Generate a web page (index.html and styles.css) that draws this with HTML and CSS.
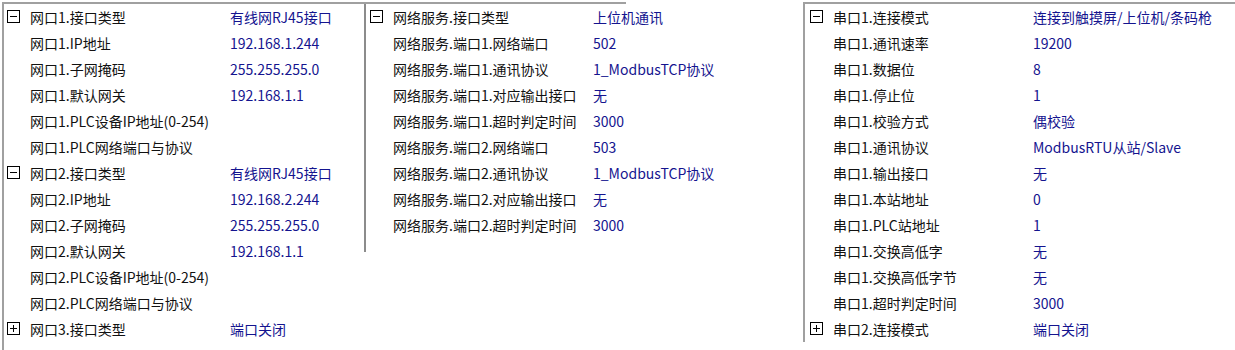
FILE: index.html
```html
<!DOCTYPE html>
<html lang="zh-CN">
<head>
<meta charset="utf-8">
<title>参数设置</title>
<link rel="stylesheet" href="styles.css">
</head>
<body>
<div class="screen">
  <div class="group-left">
    <div class="panel panel-a">
      <div class="row"><svg class="tg" viewBox="0 0 13 13"><rect x="0.5" y="0.5" width="12" height="12"/><line x1="3" y1="6.5" x2="10" y2="6.5"/></svg><span class="lbl">网口1.接口类型</span><span class="val">有线网RJ45接口</span></div>
      <div class="row"><span class="tg"></span><span class="lbl">网口1.IP地址</span><span class="val">192.168.1.244</span></div>
      <div class="row"><span class="tg"></span><span class="lbl">网口1.子网掩码</span><span class="val">255.255.255.0</span></div>
      <div class="row"><span class="tg"></span><span class="lbl">网口1.默认网关</span><span class="val">192.168.1.1</span></div>
      <div class="row"><span class="tg"></span><span class="lbl">网口1.PLC设备IP地址(0-254)</span><span class="val"></span></div>
      <div class="row"><span class="tg"></span><span class="lbl">网口1.PLC网络端口与协议</span><span class="val"></span></div>
      <div class="row"><svg class="tg" viewBox="0 0 13 13"><rect x="0.5" y="0.5" width="12" height="12"/><line x1="3" y1="6.5" x2="10" y2="6.5"/></svg><span class="lbl">网口2.接口类型</span><span class="val">有线网RJ45接口</span></div>
      <div class="row"><span class="tg"></span><span class="lbl">网口2.IP地址</span><span class="val">192.168.2.244</span></div>
      <div class="row"><span class="tg"></span><span class="lbl">网口2.子网掩码</span><span class="val">255.255.255.0</span></div>
      <div class="row"><span class="tg"></span><span class="lbl">网口2.默认网关</span><span class="val">192.168.1.1</span></div>
      <div class="row"><span class="tg"></span><span class="lbl">网口2.PLC设备IP地址(0-254)</span><span class="val"></span></div>
      <div class="row"><span class="tg"></span><span class="lbl">网口2.PLC网络端口与协议</span><span class="val"></span></div>
      <div class="row"><svg class="tg" viewBox="0 0 13 13"><rect x="0.5" y="0.5" width="12" height="12"/><line x1="3" y1="6.5" x2="10" y2="6.5"/><line x1="6.5" y1="3" x2="6.5" y2="10"/></svg><span class="lbl">网口3.接口类型</span><span class="val">端口关闭</span></div>
    </div>
    <div class="panel panel-b">
      <div class="row"><svg class="tg" viewBox="0 0 13 13"><rect x="0.5" y="0.5" width="12" height="12"/><line x1="3" y1="6.5" x2="10" y2="6.5"/></svg><span class="lbl">网络服务.接口类型</span><span class="val">上位机通讯</span></div>
      <div class="row"><span class="tg"></span><span class="lbl">网络服务.端口1.网络端口</span><span class="val">502</span></div>
      <div class="row"><span class="tg"></span><span class="lbl">网络服务.端口1.通讯协议</span><span class="val">1_ModbusTCP协议</span></div>
      <div class="row"><span class="tg"></span><span class="lbl">网络服务.端口1.对应输出接口</span><span class="val">无</span></div>
      <div class="row"><span class="tg"></span><span class="lbl">网络服务.端口1.超时判定时间</span><span class="val">3000</span></div>
      <div class="row"><span class="tg"></span><span class="lbl">网络服务.端口2.网络端口</span><span class="val">503</span></div>
      <div class="row"><span class="tg"></span><span class="lbl">网络服务.端口2.通讯协议</span><span class="val">1_ModbusTCP协议</span></div>
      <div class="row"><span class="tg"></span><span class="lbl">网络服务.端口2.对应输出接口</span><span class="val">无</span></div>
      <div class="row"><span class="tg"></span><span class="lbl">网络服务.端口2.超时判定时间</span><span class="val">3000</span></div>
    </div>
  </div>
  <div class="panel panel-c">
    <div class="row"><svg class="tg" viewBox="0 0 13 13"><rect x="0.5" y="0.5" width="12" height="12"/><line x1="3" y1="6.5" x2="10" y2="6.5"/></svg><span class="lbl">串口1.连接模式</span><span class="val">连接到触摸屏/上位机/条码枪</span></div>
    <div class="row"><span class="tg"></span><span class="lbl">串口1.通讯速率</span><span class="val">19200</span></div>
    <div class="row"><span class="tg"></span><span class="lbl">串口1.数据位</span><span class="val">8</span></div>
    <div class="row"><span class="tg"></span><span class="lbl">串口1.停止位</span><span class="val">1</span></div>
    <div class="row"><span class="tg"></span><span class="lbl">串口1.校验方式</span><span class="val">偶校验</span></div>
    <div class="row"><span class="tg"></span><span class="lbl">串口1.通讯协议</span><span class="val">ModbusRTU从站/Slave</span></div>
    <div class="row"><span class="tg"></span><span class="lbl">串口1.输出接口</span><span class="val">无</span></div>
    <div class="row"><span class="tg"></span><span class="lbl">串口1.本站地址</span><span class="val">0</span></div>
    <div class="row"><span class="tg"></span><span class="lbl">串口1.PLC站地址</span><span class="val">1</span></div>
    <div class="row"><span class="tg"></span><span class="lbl">串口1.交换高低字</span><span class="val">无</span></div>
    <div class="row"><span class="tg"></span><span class="lbl">串口1.交换高低字节</span><span class="val">无</span></div>
    <div class="row"><span class="tg"></span><span class="lbl">串口1.超时判定时间</span><span class="val">3000</span></div>
    <div class="row"><svg class="tg" viewBox="0 0 13 13"><rect x="0.5" y="0.5" width="12" height="12"/><line x1="3" y1="6.5" x2="10" y2="6.5"/><line x1="6.5" y1="3" x2="6.5" y2="10"/></svg><span class="lbl">串口2.连接模式</span><span class="val">端口关闭</span></div>
  </div>
</div>
</body>
</html>
```

FILE: styles.css
```css
html, body {
  margin: 0;
  padding: 0;
  background: #ffffff;
}

body {
  padding-top: 2px;
  font-family: "Noto Sans CJK SC", "Noto Sans", sans-serif;
  font-size: 14px;
  color: #000000;
  overflow: hidden;
}

.screen {
  display: flex;
  align-items: flex-start;
  height: 348px;
}

.group-left {
  display: flex;
  align-items: flex-start;
  margin-left: 2px;
  width: 622px;
  height: 346px;
  border-top: 2px solid #a0a0a0;
  border-left: 2px solid #a0a0a0;
}

.panel {
  display: flex;
  flex-direction: column;
}

.panel-a {
  width: 357px;
  padding-left: 3px;
  flex: none;
}

.panel-b {
  width: 256px;
  height: 248px;
  padding-left: 4px;
  border-left: 2px solid #8c8c8c;
  flex: none;
}

.panel-c {
  flex: 1;
  margin-left: 177px;
  height: 338px;
  padding-left: 5px;
  border-top: 2px solid #a0a0a0;
  border-left: 2px solid #a0a0a0;
}

.row {
  display: flex;
  align-items: center;
  height: 26px;
  white-space: nowrap;
}

.tg {
  display: block;
  width: 13px;
  height: 13px;
  margin-right: 10px;
  margin-bottom: 2px;
  flex: none;
  fill: #ffffff;
  stroke: #000000;
  stroke-width: 1;
}

.lbl {
  width: 200px;
  flex: none;
  color: #111111;
}

.val {
  color: #14148f;
}
```
